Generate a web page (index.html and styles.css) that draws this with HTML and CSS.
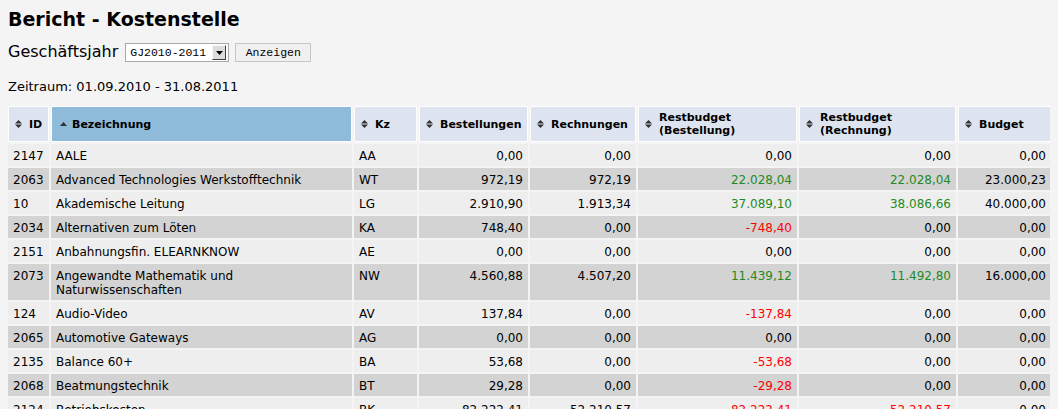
FILE: index.html
```html
<!DOCTYPE html>
<html lang="de">
<head>
<meta charset="utf-8">
<title>Bericht - Kostenstelle</title>
<link rel="stylesheet" href="styles.css">
</head>
<body>
<h1 class="title">Bericht - Kostenstelle</h1>
<form class="filter">
  <label class="filter-label">Geschäftsjahr</label>
  <span class="select">
    <span class="select-value">GJ2010-2011</span>
    <span class="select-btn"><svg width="7" height="4" viewBox="0 0 7 4"><path d="M0 0H7L3.5 4z" fill="#000"/></svg></span>
  </span>
  <button type="button" class="btn">Anzeigen</button>
</form>
<p class="period">Zeitraum: 01.09.2010 - 31.08.2011</p>
<table class="report">
  <colgroup>
    <col class="c-id"><col class="c-name"><col class="c-kz"><col class="c-best"><col class="c-rech"><col class="c-rb"><col class="c-rr"><col class="c-budget">
  </colgroup>
  <thead>
    <tr>
      <th><div class="th"><svg class="sort" width="7" height="8" viewBox="0 0 7 8"><path d="M3.5 0L7 3.5H0zM0 4.5H7L3.5 8z"/></svg><span>ID</span></div></th>
      <th class="active"><div class="th"><svg class="sort-up" width="7" height="4" viewBox="0 0 7 4"><path d="M3.5 0L7 4H0z"/></svg><span>Bezeichnung</span></div></th>
      <th><div class="th"><svg class="sort" width="7" height="8" viewBox="0 0 7 8"><path d="M3.5 0L7 3.5H0zM0 4.5H7L3.5 8z"/></svg><span>Kz</span></div></th>
      <th><div class="th"><svg class="sort" width="7" height="8" viewBox="0 0 7 8"><path d="M3.5 0L7 3.5H0zM0 4.5H7L3.5 8z"/></svg><span>Bestellungen</span></div></th>
      <th><div class="th"><svg class="sort" width="7" height="8" viewBox="0 0 7 8"><path d="M3.5 0L7 3.5H0zM0 4.5H7L3.5 8z"/></svg><span>Rechnungen</span></div></th>
      <th><div class="th"><svg class="sort" width="7" height="8" viewBox="0 0 7 8"><path d="M3.5 0L7 3.5H0zM0 4.5H7L3.5 8z"/></svg><span>Restbudget<br>(Bestellung)</span></div></th>
      <th><div class="th"><svg class="sort" width="7" height="8" viewBox="0 0 7 8"><path d="M3.5 0L7 3.5H0zM0 4.5H7L3.5 8z"/></svg><span>Restbudget<br>(Rechnung)</span></div></th>
      <th><div class="th"><svg class="sort" width="7" height="8" viewBox="0 0 7 8"><path d="M3.5 0L7 3.5H0zM0 4.5H7L3.5 8z"/></svg><span>Budget</span></div></th>
    </tr>
  </thead>
  <tbody>
    <tr><td>2147</td><td>AALE</td><td>AA</td><td class="num">0,00</td><td class="num">0,00</td><td class="num">0,00</td><td class="num">0,00</td><td class="num">0,00</td></tr>
    <tr><td>2063</td><td>Advanced Technologies Werkstofftechnik</td><td>WT</td><td class="num">972,19</td><td class="num">972,19</td><td class="num pos">22.028,04</td><td class="num pos">22.028,04</td><td class="num">23.000,23</td></tr>
    <tr><td>10</td><td>Akademische Leitung</td><td>LG</td><td class="num">2.910,90</td><td class="num">1.913,34</td><td class="num pos">37.089,10</td><td class="num pos">38.086,66</td><td class="num">40.000,00</td></tr>
    <tr><td>2034</td><td>Alternativen zum Löten</td><td>KA</td><td class="num">748,40</td><td class="num">0,00</td><td class="num neg">-748,40</td><td class="num">0,00</td><td class="num">0,00</td></tr>
    <tr><td>2151</td><td>Anbahnungsfin. ELEARNKNOW</td><td>AE</td><td class="num">0,00</td><td class="num">0,00</td><td class="num">0,00</td><td class="num">0,00</td><td class="num">0,00</td></tr>
    <tr><td>2073</td><td>Angewandte Mathematik und Naturwissenschaften</td><td>NW</td><td class="num">4.560,88</td><td class="num">4.507,20</td><td class="num pos">11.439,12</td><td class="num pos">11.492,80</td><td class="num">16.000,00</td></tr>
    <tr><td>124</td><td>Audio-Video</td><td>AV</td><td class="num">137,84</td><td class="num">0,00</td><td class="num neg">-137,84</td><td class="num">0,00</td><td class="num">0,00</td></tr>
    <tr><td>2065</td><td>Automotive Gateways</td><td>AG</td><td class="num">0,00</td><td class="num">0,00</td><td class="num">0,00</td><td class="num">0,00</td><td class="num">0,00</td></tr>
    <tr><td>2135</td><td>Balance 60+</td><td>BA</td><td class="num">53,68</td><td class="num">0,00</td><td class="num neg">-53,68</td><td class="num">0,00</td><td class="num">0,00</td></tr>
    <tr><td>2068</td><td>Beatmungstechnik</td><td>BT</td><td class="num">29,28</td><td class="num">0,00</td><td class="num neg">-29,28</td><td class="num">0,00</td><td class="num">0,00</td></tr>
    <tr><td>2124</td><td>Betriebskosten</td><td>BK</td><td class="num">82.222,41</td><td class="num">52.210,57</td><td class="num neg">-82.222,41</td><td class="num neg">-52.210,57</td><td class="num">0,00</td></tr>
  </tbody>
</table>
</body>
</html>
```

FILE: styles.css
```css
* { box-sizing: border-box; }

body {
  margin: 8px;
  background: #f4f4f4;
  font-family: "DejaVu Sans", Verdana, sans-serif;
  color: #000;
}

.title {
  margin: 0;
  font-size: 19px;
  line-height: 22px;
  font-weight: bold;
}

.filter {
  display: flex;
  align-items: center;
  height: 19px;
  margin-top: 13px;
}

.filter-label {
  align-self: flex-start;
  font-size: 16px;
  line-height: 17px;
  margin-right: 7px;
}

.select {
  display: flex;
  align-items: center;
  width: 104px;
  height: 19px;
  background: #fff;
  border: 1px solid #a9a9a9;
  padding: 0 2px 0 4px;
}

.select-value {
  flex: 1;
  font-family: "Liberation Mono", monospace;
  font-size: 11.5px;
  line-height: 17px;
}

.select-btn {
  display: flex;
  align-items: center;
  justify-content: center;
  width: 14px;
  height: 15px;
  background: #dcdcdc;
  border: 1px solid;
  border-color: #f8f8f8 #404040 #404040 #f8f8f8;
}

.btn {
  margin-left: 6px;
  width: 76px;
  height: 19px;
  padding: 0;
  background: #f0f0f0;
  border: 1px solid #c6c6c6;
  color: #000;
  font-family: "Liberation Mono", monospace;
  font-size: 11.5px;
  line-height: 17px;
}

.period {
  margin: 17px 0 0;
  font-size: 13px;
  line-height: 15px;
}

.report {
  margin: 10px 0 0 -2px;
  border-collapse: separate;
  border-spacing: 2px;
  table-layout: fixed;
  width: 1047px;
}

.c-id { width: 41px; }
.c-name { width: 301px; }
.c-kz { width: 63px; }
.c-best { width: 109px; }
.c-rech { width: 106px; }
.c-rb { width: 159px; }
.c-rr { width: 157px; }
.c-budget { width: 93px; }

.report th {
  height: 36px;
  padding: 0 6px;
  background: #dde4ef;
  border: 1px solid #fff;
  font-size: 11px;
  font-weight: bold;
  line-height: 13px;
  text-align: left;
  vertical-align: middle;
}

.report th.active {
  background: #8dbbd9;
  padding-left: 8px;
}

.th {
  display: flex;
  align-items: center;
  gap: 7px;
}

.active .th { gap: 5px; }

.sort, .sort-up {
  flex: none;
  fill: #333;
}

.report td {
  padding: 5px 5px 3px;
  background: #eeeeee;
  font-size: 12px;
  line-height: 14px;
  vertical-align: top;
}

.report tbody tr:nth-child(even) td {
  background: #d3d3d3;
}

.report td.num { text-align: right; }
.report td.pos { color: #238a23; }
.report td.neg { color: #ff0000; }
```
